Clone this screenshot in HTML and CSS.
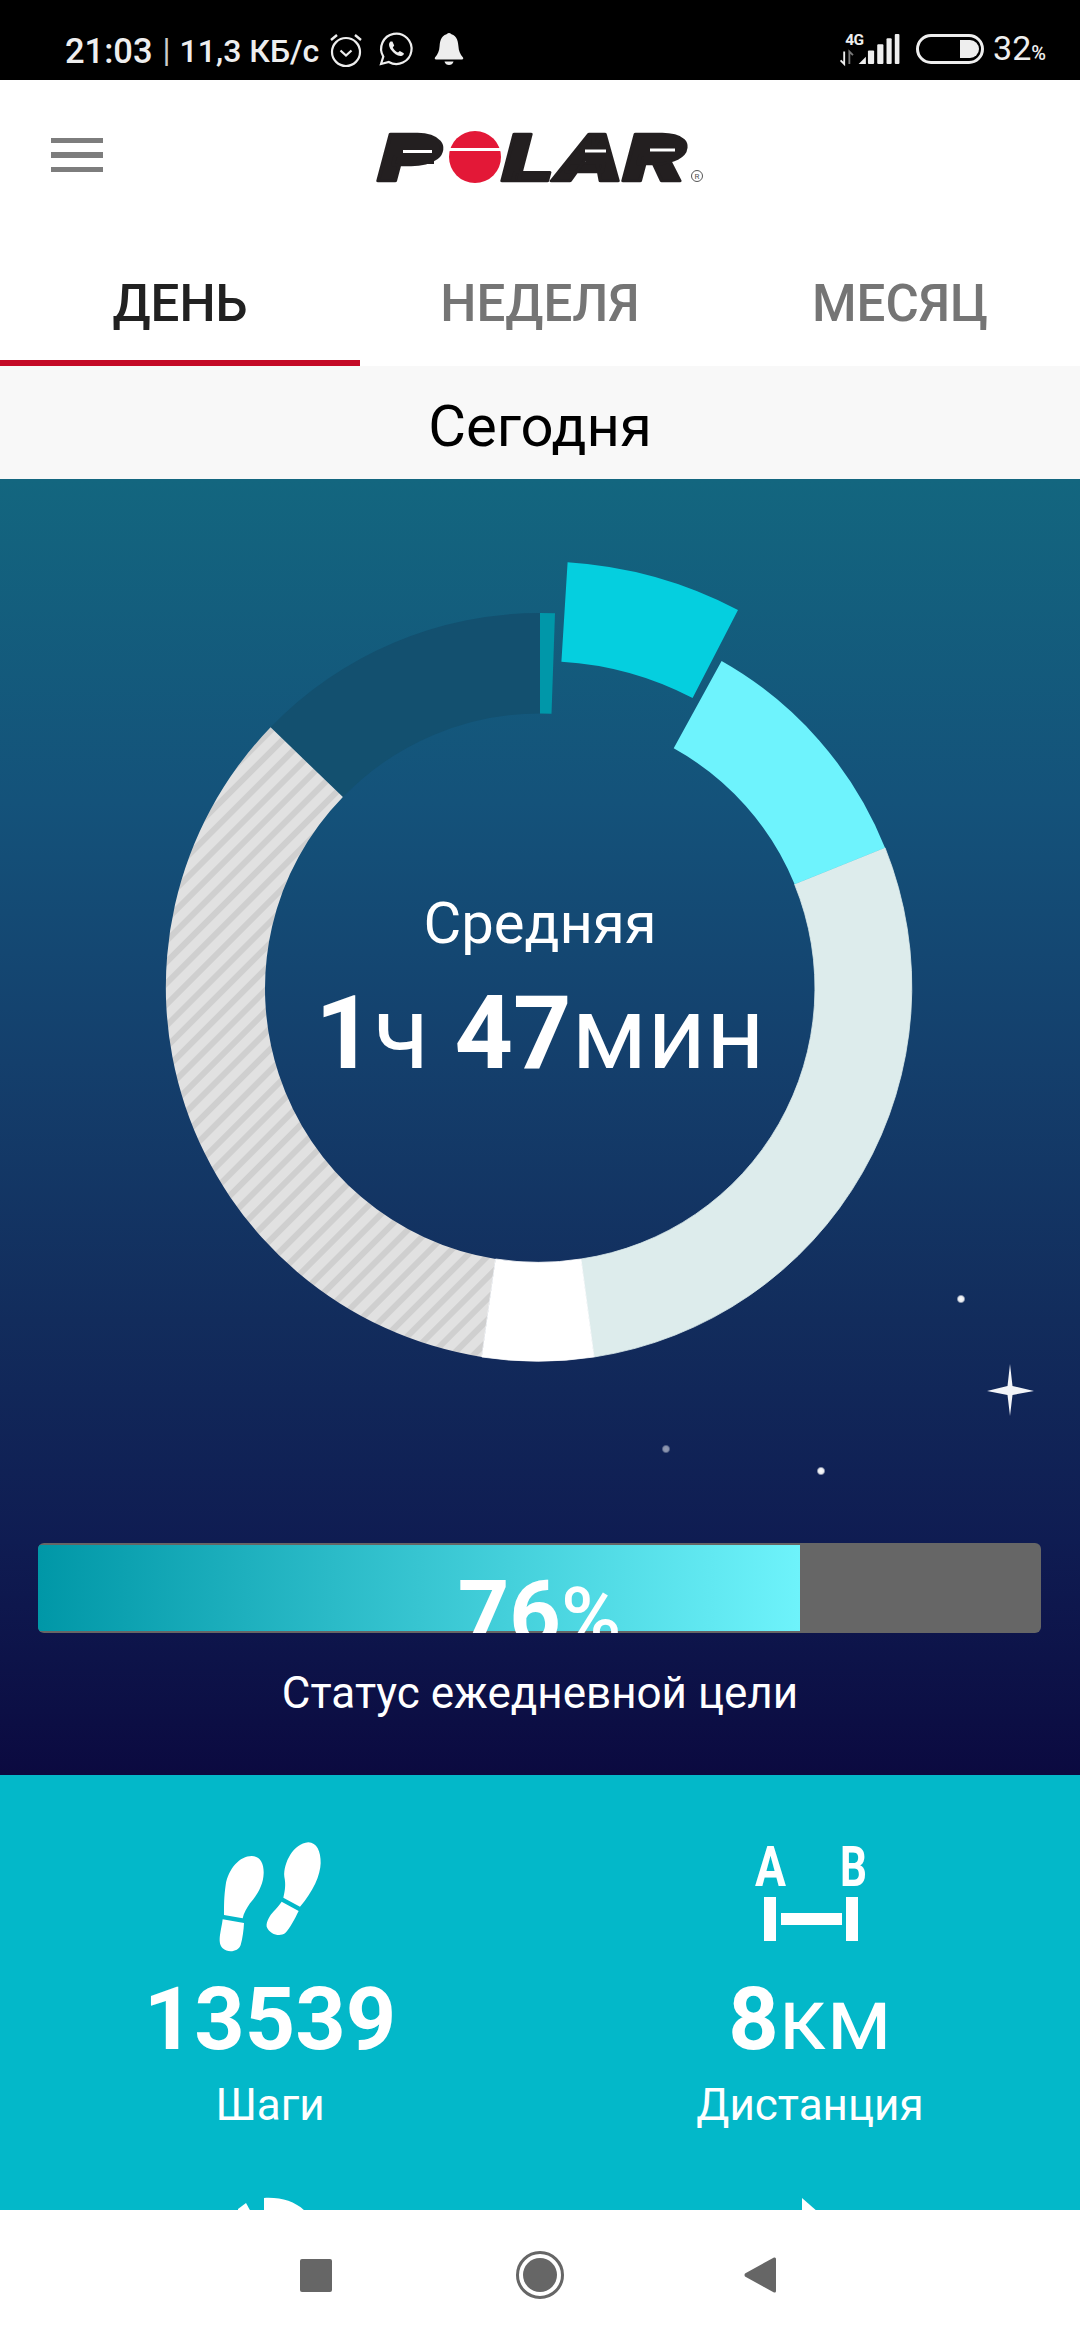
FILE: index.html
```html
<!DOCTYPE html>
<html lang="ru">
<head>
<meta charset="utf-8">
<title>Polar</title>
<link rel="stylesheet" href="styles.css">
</head>
<body>
<div class="app">
  <div class="statusbar">
    <span class="st-time">21:03</span><span class="st-sep">|</span><span class="st-speed">11,3 КБ/с</span>
    <svg class="st-alarm" width="34" height="36" viewBox="0 0 34 36" fill="none" stroke="#eee" stroke-width="2.2">
      <circle cx="17" cy="20" r="14"/>
      <path d="M2 8 L8 3 M32 8 L26 3" stroke-width="2.4"/>
      <path d="M11.5 18.5 L17 23.5 L22.5 18.5"/>
    </svg>
    <svg class="st-wa" width="36" height="36" viewBox="0 0 36 36" fill="none" stroke="#eee" stroke-width="2.2">
      <path d="M3 33 L5.3 25.6 A15.2 15.2 0 1 1 10.8 31 Z"/>
      <path d="M12.5 10.5 C10.5 12 10.5 15 13 18.8 C16 23 20 25.6 23.4 25 C25 24.6 26 23.4 25.8 22.2 L21.8 20 L20 21.6 C18 20.8 15.6 18.4 14.8 16.4 L16.2 14.6 L14.4 10.4 Z" fill="#eee" stroke="none"/>
    </svg>
    <svg class="st-bell" width="30" height="34" viewBox="0 0 30 34" fill="#eee">
      <circle cx="15" cy="3.5" r="2.5"/>
      <path d="M15 2 C8 2 6 8 5.6 14 C5.3 19 4 22 1 25.5 C0.4 26.8 1 27.5 2 27.5 L28 27.5 C29 27.5 29.6 26.8 29 25.5 C26 22 24.7 19 24.4 14 C24 8 22 2 15 2Z"/>
      <path d="M10.5 29.5 L19.5 29.5 C19 32 17 33 15 33 C13 33 11 32 10.5 29.5Z"/>
    </svg>
    <svg class="st-signal" width="60" height="32" viewBox="843 33 58 31" fill="#eee">
      <text class="st-4g" x="848" y="44.5">4G</text>
      <path d="M847 51 V63 L843.5 59.5 M847 63" stroke="#eee" stroke-width="1.8" fill="none"/>
      <path d="M852 63 V51 L855.5 54.5" stroke="#777" stroke-width="1.8" fill="none"/>
      <path d="M861 63 L868 56 V63 Z"/>
      <rect x="870" y="50" width="6" height="13" rx="1"/>
      <rect x="879" y="44" width="6" height="19" rx="1"/>
      <rect x="888" y="38" width="5" height="25" rx="1"/>
      <rect x="896" y="34" width="4.5" height="29" rx="1"/>
    </svg>
    <svg class="st-batt" width="68" height="30" viewBox="0 0 68 30">
      <rect x="1.5" y="1.5" width="65" height="27" rx="13.5" fill="none" stroke="#eee" stroke-width="3"/>
      <path d="M44 6 H54 A9 9 0 0 1 54 24 H44 Z" fill="#eee"/>
    </svg>
    <span class="st-pct">32<span class="st-pct-sign">%</span></span>
  </div>

  <header class="topbar">
    <div class="burger"><i></i><i></i><i></i></div>
    <svg class="logo" width="332" height="56" viewBox="375 129 332 56">
      <g class="logo-letters">
        <text x="378" y="181" textLength="64" lengthAdjust="spacingAndGlyphs">P</text>
        <text x="502" y="181" textLength="52" lengthAdjust="spacingAndGlyphs">L</text>
        <text x="557" y="181" textLength="66" lengthAdjust="spacingAndGlyphs">A</text>
        <text x="623" y="181" textLength="64" lengthAdjust="spacingAndGlyphs">R</text>
      </g>
      <rect x="398" y="140" width="36" height="24" fill="#231f20"/>
      <rect x="644" y="140" width="32" height="20" fill="#231f20"/>
      <rect x="586" y="146" width="18" height="18" fill="#231f20"/>
      <path d="M403 151.5 H432" stroke="#fff" stroke-width="3"/>
      <path d="M650 150 H675" stroke="#fff" stroke-width="3"/>
      <path d="M585 151 H606" stroke="#fff" stroke-width="3"/>
      <circle cx="475" cy="157" r="26" fill="#e31837"/>
      <rect x="448" y="148" width="54" height="3" fill="#fff"/>
      <circle cx="697" cy="176" r="5.5" fill="none" stroke="#555" stroke-width="1"/>
      <text class="logo-r" x="697" y="179">R</text>
    </svg>
  </header>

  <nav class="tabs">
    <div class="tab tab-active">ДЕНЬ</div>
    <div class="tab">НЕДЕЛЯ</div>
    <div class="tab">МЕСЯЦ</div>
  </nav>

  <div class="dateband">Сегодня</div>

  <main class="content">
    <section class="hero">
      <div class="canvas">
        <svg class="ring" width="1080" height="1040" viewBox="0 479 1080 1040">
          <defs>
            <pattern id="stripes" patternUnits="userSpaceOnUse" width="15" height="15" patternTransform="rotate(45)">
              <rect width="15" height="15" fill="#e1e1e1"/>
              <rect width="6" height="15" fill="#cfcfcf"/>
            </pattern>
            <radialGradient id="sparkle">
              <stop offset="0" stop-color="#fff"/>
              <stop offset="0.6" stop-color="#fff" stop-opacity="0.9"/>
              <stop offset="1" stop-color="#fff" stop-opacity="0"/>
            </radialGradient>
          </defs>
          <path d="M270.6 727.3 A374.5 374.5 0 0 1 540 613 L540 713.5 A274 274 0 0 0 342.9 797.1 Z" fill="#13506f"/>
          <path d="M540 613 L555 613.3 L551.5 713.7 L540 713.5 Z" fill="#0097a9"/>
          <path d="M567.6 562.3 A426 426 0 0 1 738 610 L692.6 698 A326 326 0 0 0 561.4 661.7 Z" fill="#05cfdf"/>
          <path d="M885 847.7 A374.5 374.5 0 0 1 594 1357 L581 1259 A274 274 0 0 0 794.6 884.3 Z" fill="#ddecec" stroke="#ddecec" stroke-width="0.8"/>
          <path d="M721.6 661 A374.5 374.5 0 0 1 885 847.7 L794.6 884.3 A274 274 0 0 0 673.7 748.3 Z" fill="#6ef3fd"/>
          <path d="M481.8 1357 A374.5 374.5 0 0 1 270.6 727.3 L342.9 797.1 A274 274 0 0 0 495.6 1259 Z" fill="url(#stripes)"/>
          <path d="M594 1357 A374.5 374.5 0 0 1 481.8 1357 L495.6 1259 A274 274 0 0 0 581 1259 Z" fill="#fff" stroke="#fff" stroke-width="0.8"/>
          <circle cx="961" cy="1299" r="4.5" fill="url(#sparkle)"/>
          <circle cx="666" cy="1449" r="4.5" fill="url(#sparkle)" opacity="0.55"/>
          <circle cx="821" cy="1471" r="4.5" fill="url(#sparkle)"/>
          <path d="M1010 1364 L1012.5 1386 L1034 1391 L1012.5 1395 L1010 1416 L1007.5 1395 L987 1391 L1007.5 1386 Z" fill="#f2f4f8"/>
        </svg>
        <div class="ring-center">
          <div class="ring-label">Средняя</div>
          <div class="ring-value"><b>1</b>ч <b>47</b>мин</div>
        </div>
      </div>
      <div class="goalbar">
        <div class="goalfill"></div>
        <div class="goaltext"><b>76</b><span class="goalpct">%</span></div>
      </div>
      <div class="goallabel">Статус ежедневной цели</div>
    </section>

    <section class="stats">
      <div class="stat">
        <svg class="stat-icon" width="140" height="110" viewBox="0 36 420 330" fill="#fff">
          <path d="M155 78 C180 78 192 100 191 130 C190 165 172 195 150 220 C140 235 131 250 128 265 L72 255 C72 225 72 200 77 165 C85 115 120 78 155 78Z"/>
          <path d="M68 268 L132 279 C131 300 128 325 122 345 C115 365 85 370 68 355 C58 345 58 330 60 315 C62 300 66 285 68 268Z"/>
          <path d="M325 37 C350 37 363 65 362 100 C361 135 340 185 300 230 L250 203 C255 180 258 165 253 140 C250 100 280 40 325 37Z"/>
          <path d="M245 215 L296 243 C285 265 270 295 255 310 C240 320 210 315 200 290 C198 275 210 255 220 245 C230 235 238 225 245 215Z"/>
        </svg>
        <div class="stat-value"><b>13539</b></div>
        <div class="stat-label">Шаги</div>
      </div>
      <div class="stat">
        <svg class="stat-icon" width="120" height="110" viewBox="750 1842 120 110" fill="#fff">
          <text class="ab" x="755" y="1886" textLength="31" lengthAdjust="spacingAndGlyphs">A</text>
          <text class="ab" x="840" y="1886" textLength="27" lengthAdjust="spacingAndGlyphs">B</text>
          <rect x="764" y="1897" width="12" height="44"/>
          <rect x="846" y="1897" width="12" height="44"/>
          <rect x="781" y="1913" width="61" height="12"/>
        </svg>
        <div class="stat-value"><b>8</b>км</div>
        <div class="stat-label">Дистанция</div>
      </div>
      <div class="stat">
        <svg class="stat-icon" width="120" height="110" viewBox="210 2198 120 110" fill="#fff">
          <path d="M264 2198 C282 2197 296 2202 306 2212 L264 2212Z"/>
          <path d="M238 2209 L246 2203 L251 2212 L238 2212Z"/>
        </svg>
      </div>
      <div class="stat">
        <svg class="stat-icon" width="120" height="110" viewBox="750 2198 120 110" fill="#fff">
          <path d="M802 2198 L818 2212 L802 2212Z"/>
        </svg>
      </div>
    </section>
  </main>

  <footer class="navbar">
    <div class="nav-square"></div>
    <div class="nav-home"><i></i></div>
    <svg class="nav-back" width="32" height="36" viewBox="0 0 32 36"><path d="M30 0.5 Q32 0 32 2 V34 Q32 36 30 35.5 L1 19.5 Q0 18 1 16.5 Z" fill="#666"/></svg>
  </footer>
</div>
</body>
</html>
```
FILE: styles.css
```css
* { box-sizing: border-box; }
html, body { margin: 0; padding: 0; }
body { font-family: Roboto, "Noto Sans", sans-serif; background: #fff; }
b { font-weight: 700; }
svg { overflow: visible; }

.app { width: 1080px; height: 2340px; display: flex; flex-direction: column; overflow: hidden; }

/* status bar */
.statusbar { height: 80px; flex: none; background: #000; color: #eee; display: flex; align-items: center; padding: 21px 34px 0 65px; }
.statusbar svg { flex: none; }
.st-time { font-size: 34.5px; font-weight: 500; line-height: 40px; white-space: nowrap; }
.st-sep { font-size: 33px; font-weight: 400; line-height: 40px; margin: 0 9px 0 10px; color: #ccc; }
.st-speed { font-size: 32px; font-weight: 500; line-height: 40px; white-space: nowrap; }
.st-alarm { margin-left: 10px; margin-top: -2px; }
.st-wa { margin-left: 15px; margin-top: -4px; }
.st-bell { margin-left: 20px; margin-top: -3px; }
.st-signal { margin-left: auto; margin-top: -3px; }
.st-4g { font-size: 15px; font-weight: 700; letter-spacing: -0.5px; }
.st-batt { margin-left: 16px; margin-top: -3px; }
.st-pct { margin-left: 9px; font-size: 34px; line-height: 40px; white-space: nowrap; }
.st-pct-sign { font-size: 20px; font-weight: 500; }

/* top bar */
.topbar { height: 156px; flex: none; background: #fff; display: flex; align-items: center; padding-left: 51px; }
.burger { width: 52px; display: flex; flex-direction: column; gap: 9px; margin-top: -6px; }
.burger i { display: block; height: 5.5px; background: #7d7d7d; }
.logo { margin-left: 272px; margin-top: -3px; }
.logo-letters { font-family: Roboto, sans-serif; font-weight: 900; font-style: italic; font-size: 66px; fill: #231f20; stroke: #231f20; stroke-width: 2.5px; stroke-linejoin: round; }
.logo-r { font-family: Roboto, sans-serif; font-size: 8px; fill: #555; text-anchor: middle; }

/* tabs */
.tabs { height: 130px; flex: none; display: grid; grid-template-columns: repeat(3, 360px); background: #fff; }
.tab { display: flex; align-items: center; justify-content: center; padding-top: 10px; font-size: 51px; font-weight: 500; color: #757575; border-bottom: 6px solid transparent; }
.tab-active { color: #212121; border-bottom-color: #c40a26; }

.dateband { height: 113px; flex: none; background: #f8f8f8; color: #000; display: flex; align-items: center; justify-content: center; padding-top: 7px; font-size: 58px; }

/* hero */
.content { flex: 1; min-height: 0; overflow: hidden; }
.hero { background: linear-gradient(180deg, #13667f 0%, #14527a 25%, #143f6c 45%, #122c5c 65%, #0f1c52 82%, #0b0a40 100%); padding-bottom: 52px; color: #fff; }
.canvas { position: relative; height: 1040px; }
.ring { display: block; }
.ring-center { position: absolute; inset: 0; padding-top: 409px; display: flex; flex-direction: column; align-items: center; }
.ring-label { font-size: 58px; line-height: 70px; }
.ring-value { margin-top: 15px; font-size: 102px; line-height: 120px; white-space: nowrap; }

.goalbar { position: relative; height: 90px; margin: 24px 39px 0 38px; background: #666; border-radius: 6px; overflow: hidden; padding: 2px 0; }
.goalfill { width: 76%; height: 100%; background: linear-gradient(90deg, #0097a7, #6ef3fb); }
.goaltext { position: absolute; left: 0; right: 0; top: 22px; text-align: center; font-size: 90px; line-height: 100px; white-space: nowrap; }
.goalpct { font-size: 82px; font-weight: 500; }
.goallabel { margin-top: 30px; text-align: center; font-size: 44px; line-height: 60px; }

/* stats */
.stats { background: #03b8c9; color: #fff; display: grid; grid-template-columns: 1fr 1fr; row-gap: 68px; padding-top: 67px; }
.stat { display: flex; flex-direction: column; align-items: center; }
.stat-icon { display: block; height: 110px; }
.ab { font-family: Roboto, sans-serif; font-weight: 700; font-size: 56px; }
.stat-value { margin-top: 17px; font-size: 88px; line-height: 100px; }
.stat-label { margin-top: 11px; font-size: 44px; line-height: 50px; }

/* nav */
.navbar { height: 130px; flex: none; background: #fff; display: flex; align-items: center; padding: 0 0 0 300px; }
.nav-square { width: 32px; height: 33px; background: #666; border-radius: 2px; }
.nav-home { width: 48px; height: 48px; margin: 0 180px 0 184px; border: 3px solid #666; border-radius: 50%; padding: 4px; }
.nav-home i { display: block; width: 100%; height: 100%; border-radius: 50%; background: #666; }
.nav-back { display: block; }
```
